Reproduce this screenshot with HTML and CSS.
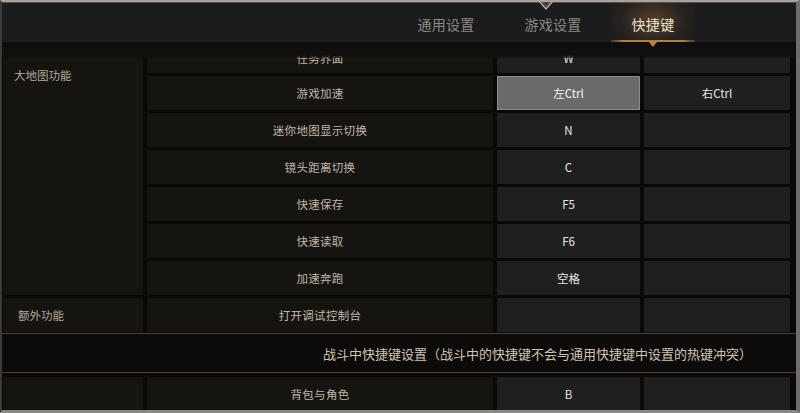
FILE: index.html
```html
<!DOCTYPE html>
<html lang="zh-CN">
<head>
<meta charset="utf-8">
<title>快捷键</title>
<link rel="stylesheet" href="styles.css">
</head>
<body>
<div class="screen">
  <svg class="top-chevron" width="14" height="10" viewBox="0 0 14 10">
    <polyline points="1,0 7,7 13,0" fill="none" stroke="#b9b4ae" stroke-width="1.4"/>
    <polyline points="3.5,0 7,4 10.5,0" fill="none" stroke="#6e5a48" stroke-width="1.2"/>
  </svg>
  <header class="tabs">
    <div class="tab tab-general">通用设置</div>
    <div class="tab tab-game">游戏设置</div>
    <div class="tab tab-keys active">快捷键</div>
  </header>
  <main class="table">
    <div class="fade"></div>
    <section class="group">
      <div class="cat cat-top">大地图功能</div>
      <div class="rows">
        <div class="row row-first"><div class="name">任务界面</div><div class="key">W</div><div class="key"></div></div>
        <div class="row"><div class="name">游戏加速</div><div class="key selected">左Ctrl</div><div class="key">右Ctrl</div></div>
        <div class="row"><div class="name">迷你地图显示切换</div><div class="key">N</div><div class="key"></div></div>
        <div class="row"><div class="name">镜头距离切换</div><div class="key">C</div><div class="key"></div></div>
        <div class="row"><div class="name">快速保存</div><div class="key">F5</div><div class="key"></div></div>
        <div class="row"><div class="name">快速读取</div><div class="key">F6</div><div class="key"></div></div>
        <div class="row"><div class="name">加速奔跑</div><div class="key">空格</div><div class="key"></div></div>
      </div>
    </section>
    <section class="group">
      <div class="cat cat-mid">额外功能</div>
      <div class="rows">
        <div class="row"><div class="name">打开调试控制台</div><div class="key"></div><div class="key"></div></div>
      </div>
    </section>
    <div class="band">战斗中快捷键设置（战斗中的快捷键不会与通用快捷键中设置的热键冲突）</div>
    <section class="group group-last">
      <div class="cat"></div>
      <div class="rows">
        <div class="row"><div class="name">背包与角色</div><div class="key">B</div><div class="key"></div></div>
      </div>
    </section>
  </main>
</div>
</body>
</html>
```

FILE: styles.css
```css
* { box-sizing: border-box; margin: 0; padding: 0; }
html, body { width: 800px; height: 413px; overflow: hidden; background: #0a0907; }
body { font-family: "Noto Sans CJK SC", "Noto Sans", sans-serif; }

.screen {
  position: relative;
  width: 800px;
  height: 413px;
  overflow: hidden;
  background: #0a0907;
  border-top: 2px solid #a9a39d;
  border-left: 2px solid #3d3a37;
  border-right: 4px solid #6f6d6b;
  border-bottom: 3px solid #8a8886;
  display: flex;
  flex-direction: column;
}

.top-chevron { position: absolute; top: 0; left: 537px; z-index: 5; }

.tabs {
  flex: none;
  height: 40px;
  background: #1c1c1e;
  border-top: 1px solid #5b4a3e;
  display: flex;
  justify-content: flex-end;
  padding-right: 101px;
}
.tab {
  position: relative;
  display: flex;
  align-items: center;
  justify-content: center;
  padding-top: 3px;
  font-size: 14px;
  color: #8b8885;
  letter-spacing: 0.3px;
}
.tab-general { width: 98px; }
.tab-game { width: 116px; }
.tab-keys { width: 84px; }
.tab.active {
  color: #efe4d2;
  background: radial-gradient(ellipse 60% 90% at 50% 45%, rgba(140,100,55,0.5), rgba(70,52,34,0.25) 65%, rgba(28,28,30,0) 100%);
}
.tab.active::after {
  content: "";
  position: absolute;
  left: 0; right: 0; bottom: 0;
  height: 2px;
  background: linear-gradient(90deg, rgba(170,115,60,0.3), #b87d42 15%, #b87d42 85%, rgba(170,115,60,0.3));
}
.tab.active::before {
  content: "";
  position: absolute;
  left: 50%;
  bottom: -5px;
  margin-left: -4px;
  border-left: 4px solid transparent;
  border-right: 4px solid transparent;
  border-top: 5px solid #c0843f;
  z-index: 4;
}

.table {
  position: relative;
  flex: 1;
  display: flex;
  flex-direction: column;
  padding-left: 1px;
  overflow: hidden;
}
.fade {
  position: absolute;
  left: 0; right: 0; top: 0;
  height: 16px;
  background: linear-gradient(#0f0e0c 0, #100f0d 82%, rgba(16,15,13,0.5) 100%);
  z-index: 3;
}

.group { display: flex; gap: 4px; flex: none; }
.group + .group { margin-top: 3px; }
.cat {
  width: 140px;
  background: #151411;
  font-size: 11.5px;
  color: #b3a999;
  padding-left: 11px;
}
.cat-top { padding-top: 25px; line-height: 16px; }
.cat-mid { display: flex; align-items: center; padding-left: 15px; }

.rows { display: flex; flex-direction: column; gap: 3px; }
.row {
  display: grid;
  grid-template-columns: 346px 143px 146px;
  column-gap: 4px;
  height: 34px;
}
.row-first { height: 31px; }
.name, .key {
  display: flex;
  align-items: center;
  justify-content: center;
  font-size: 11.5px;
}
.name { background: #151411; color: #c2b8a8; letter-spacing: 0.3px; }
.key { background: #1f1f1f; color: #e6e6e6; }
.key.selected { background: #6a6a6a; border: 1px solid #8c8c8c; color: #f4f4f4; }

.band {
  flex: none;
  margin-top: 1px;
  margin-left: -1px;
  height: 40px;
  background: #0d0b09;
  border-top: 1px solid #4f4433;
  border-bottom: 1px solid #4f4433;
  display: flex;
  align-items: center;
  justify-content: flex-end;
  padding-right: 44px;
  font-size: 13px;
  letter-spacing: 0;
  color: #cfc4b2;
}
.group-last { margin-top: 4px; }
```
